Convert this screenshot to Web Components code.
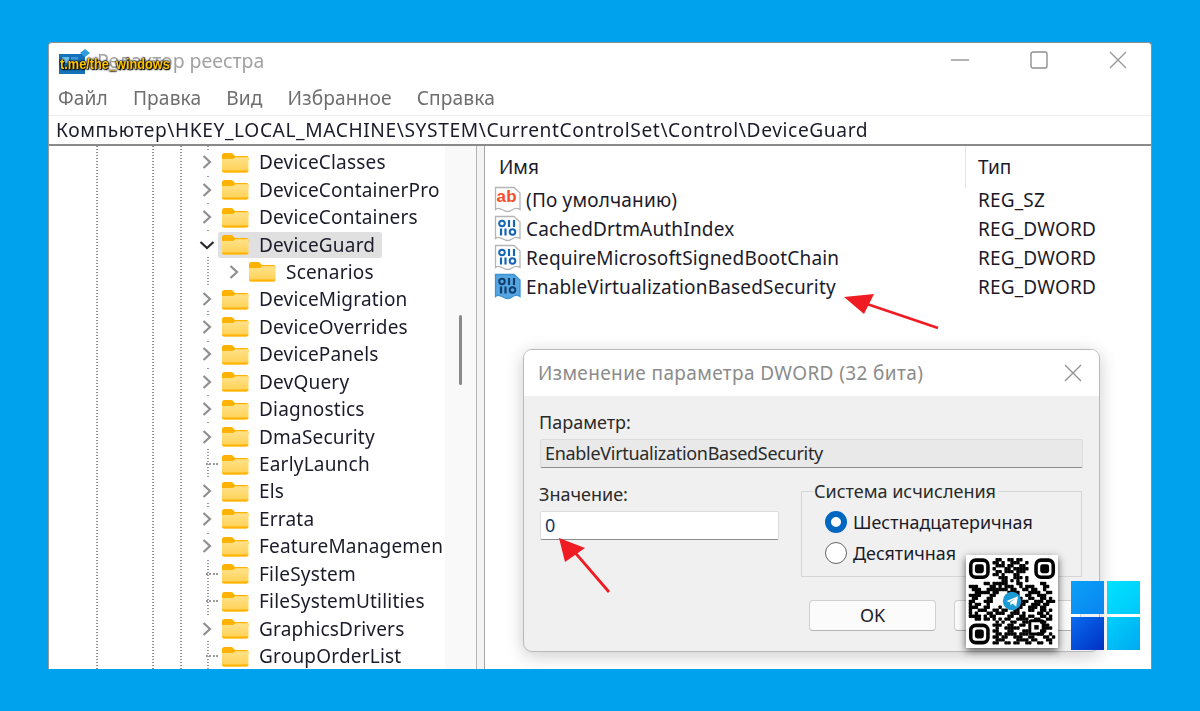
<!DOCTYPE html>
<html lang="ru">
<head>
<meta charset="utf-8">
<title>Редактор реестра</title>
<style>
  html, body { margin: 0; height: 100%; }
  body { background: #00a2ed; overflow: hidden; font-family: "Noto Sans", "Open Sans", sans-serif; }
</style>
</head>
<body>
<reg-window>
  <reg-tree slot="tree"></reg-tree>
  <reg-list slot="list"></reg-list>
  <dword-dialog slot="over"></dword-dialog>
  <red-arrows slot="over"></red-arrows>
</reg-window>
<qr-badge></qr-badge>
<win-logo></win-logo>

<script>
const folderIcon = `
  <svg width="28" height="21" viewBox="0 0 28 21">
    <defs><linearGradient id="f" x1="0" y1="0" x2="0" y2="1"><stop offset="0" stop-color="#ffe28a"/><stop offset="1" stop-color="#ffd052"/></linearGradient></defs>
    <path d="M1 3.500Q1 1 3.500 1H11l3 3h11.500Q27.500 4 27.500 6V8H1Z" fill="#ffb200"/>
    <path d="M1 7H12l2.500-1.800H27.500V18.500Q27.500 20.500 25.500 20.500H3Q1 20.500 1 18.500Z" fill="url(#f)"/>
    <path d="M1 18.500H27.500Q27.500 20.500 25.500 20.500H3Q1 20.500 1 18.500Z" fill="#ffb200"/>
  </svg>`;

class TreeRow extends HTMLElement {
  connectedCallback() {
    const name = this.getAttribute('name');
    const exp = this.getAttribute('exp') || 'closed';
    const sub = this.hasAttribute('sub');
    const sel = this.hasAttribute('selected');
    let mark = '<span class="stub"></span>';
    if (exp === 'closed') mark = '<svg class="chev" width="14" height="24" viewBox="0 0 14 24"><path d="M3.500 6 10 12 3.500 18" fill="none" stroke="#8f8f8f" stroke-width="2.200"/></svg>';
    if (exp === 'open') mark = '<svg class="chev" width="16" height="24" viewBox="0 0 16 24"><path d="M1.500 9 8 15 14.500 9" fill="none" stroke="#2a2a2a" stroke-width="2.200"/></svg>';
    this.attachShadow({mode:'open'}).innerHTML = `
      <style>
        :host { display: flex; align-items: center; height: 27.44px; padding-left: ${sub ? 174 : 147}px; white-space: nowrap; color: #1b1b2a; }
        .exp { width: 22px; display: flex; justify-content: center; align-items: center; flex: none; height: 100%; }
        .chev { background: #fff; }
        .stub { width: 13px; margin-left: 10px; border-top: 2px dotted #9a9a9a; }
        .item { display: flex; align-items: center; gap: 10px; height: 26px; padding: 0 7px 0 3px; border-radius: 2px; background: ${sel ? '#e0e0e0' : 'transparent'}; flex: none; }
        svg { display: block; flex: none; }
        span.t { font-size: 19px; line-height: 26px; letter-spacing: .2px; }
      </style>
      <span class="exp">${mark}</span>
      <span class="item">${folderIcon}<span class="t">${name}</span></span>`;
  }
}
customElements.define('tree-row', TreeRow);

class RegTree extends HTMLElement {
  connectedCallback() {
    const rows = [
      ['DeviceClasses'], ['DeviceContainerPro'], ['DeviceContainers'],
      ['DeviceGuard', 'open', 'sel'], ['Scenarios', 'closed', 'sub'],
      ['DeviceMigration'], ['DeviceOverrides'], ['DevicePanels'], ['DevQuery'],
      ['Diagnostics'], ['DmaSecurity'], ['EarlyLaunch', 'none'], ['Els'], ['Errata'],
      ['FeatureManagemen'], ['FileSystem', 'none'], ['FileSystemUtilities', 'none'],
      ['GraphicsDrivers'], ['GroupOrderList', 'none']
    ];
    this.attachShadow({mode:'open'}).innerHTML = `
      <style>
        :host { display: flex; height: 100%; overflow: hidden; background: #fff; }
        .rows {
          width: 396px; flex: none; overflow: hidden; padding-top: 3px;
          background:
            linear-gradient(#8f8f8f 50%, transparent 50%) 47px 0 / 2px 3px repeat-y,
            linear-gradient(#8f8f8f 50%, transparent 50%) 103px 0 / 2px 3px repeat-y,
            linear-gradient(#8f8f8f 50%, transparent 50%) 131px 0 / 2px 3px repeat-y,
            linear-gradient(#9a9a9a 50%, transparent 50%) 158px 0 / 2px 3px repeat-y;
        }
        .track { width: 31px; flex: none; background: #f9f9f9; display: flex; justify-content: center; padding-top: 169px; box-sizing: border-box; }
        .thumb { width: 3px; height: 70px; background: #8a8a8a; border-radius: 2px; }
      </style>
      <div class="rows">${rows.map(r => `<tree-row name="${r[0]}" exp="${r[1] || 'closed'}" ${r[2] === 'sel' ? 'selected' : ''} ${r[2] === 'sub' ? 'sub' : ''}></tree-row>`).join('')}</div>
      <div class="track"><div class="thumb"></div></div>`;
  }
}
customElements.define('reg-tree', RegTree);

// little page icon of the value list: "ab" text or the binary pattern
function valueIcon(kind) {
  const sel = kind === 'sel';
  const page = `<path d="M1.500 1.500H20L26 7V23.500Q22 21 18 24T9 24 1.500 23.500Z" fill="${sel ? '#55a6e2' : '#fff'}" stroke="${sel ? '#3f93d2' : '#b5b5b5'}" stroke-width="1.300"/>`;
  if (kind === 'ab') {
    return `<svg width="29" height="27" viewBox="0 0 29 27">${page}
      <text x="2.500" y="15.500" font-family="Liberation Sans" font-weight="700" font-size="17" fill="#f4502a">ab</text></svg>`;
  }
  const c = sel ? '#12406e' : '#1565b5';
  const ring = (x, y) => `<ellipse cx="${x}" cy="${y}" rx="2.800" ry="2.700" fill="none" stroke="${c}" stroke-width="2"/>`;
  const bar = (x, y) => `<rect x="${x - 1.100}" y="${y - 3.500}" width="2.200" height="7" fill="${c}"/>`;
  return `<svg width="29" height="27" viewBox="0 0 29 27">${page}
    ${ring(8, 8.500)}${bar(15, 8.500)}${bar(20, 8.500)}
    ${bar(7, 17)}${bar(11.500, 17)}${ring(18.500, 17)}</svg>`;
}

class ValueRow extends HTMLElement {
  connectedCallback() {
    this.attachShadow({mode:'open'}).innerHTML = `
      <style>
        :host { display: grid; grid-template-columns: 480px 1fr; align-items: center; height: 29px; color: #1b1b2a; font-size: 19px; letter-spacing: .18px; white-space: nowrap; }
        .n { display: flex; align-items: center; gap: 3px; padding-left: 9px; }
        .ty { padding-left: 13px; }
        svg { display: block; flex: none; }
      </style>
      <div class="n">${valueIcon(this.getAttribute('icon'))}<span>${this.getAttribute('name')}</span></div>
      <div class="ty">${this.getAttribute('type')}</div>`;
  }
}
customElements.define('value-row', ValueRow);

class RegList extends HTMLElement {
  connectedCallback() {
    this.attachShadow({mode:'open'}).innerHTML = `
      <style>
        :host { display: block; height: 100%; background: #fff; }
        .head { display: grid; grid-template-columns: 480px 1fr; height: 39.500px; font-size: 19px; color: #1b1b2a; line-height: 42px; }
        .head div:first-child { padding-left: 14px; }
        .head div:last-child { padding-left: 12px; border-left: 1px solid #e4e4e4; }
      </style>
      <div class="head"><div>Имя</div><div>Тип</div></div>
      <div class="rows">
        <value-row icon="ab" name="(По умолчанию)" type="REG_SZ"></value-row>
        <value-row icon="bin" name="CachedDrtmAuthIndex" type="REG_DWORD"></value-row>
        <value-row icon="bin" name="RequireMicrosoftSignedBootChain" type="REG_DWORD"></value-row>
        <value-row icon="sel" name="EnableVirtualizationBasedSecurity" type="REG_DWORD"></value-row>
      </div>`;
  }
}
customElements.define('reg-list', RegList);

class RadioOpt extends HTMLElement {
  connectedCallback() {
    const on = this.hasAttribute('checked');
    this.attachShadow({mode:'open'}).innerHTML = `
      <style>
        :host { display: flex; align-items: center; gap: 6px; height: 31px; font-size: 17.900px; color: #1b1b2a; white-space: nowrap; }
        i { width: 22px; height: 22px; box-sizing: border-box; border-radius: 50%; flex: none; background: #fff; border: ${on ? '6.500px solid #0067c0' : '1.700px solid #666'}; }
      </style>
      <i></i><span><slot></slot></span>`;
  }
}
customElements.define('radio-opt', RadioOpt);

class DwordDialog extends HTMLElement {
  constructor() {
    super();
    this.attachShadow({mode:'open'}).innerHTML = `
      <style>
        :host { position: absolute; left: 474px; top: 306px; width: 577px; height: 303px; box-sizing: border-box; display: flex; flex-direction: column; background: #f0f0f0; border: 1px solid #b9b9b9; border-radius: 9px; overflow: hidden; box-shadow: 0 4px 18px rgba(0,0,0,.2); color: #2a2a2a; font-size: 18px; }
        .title { height: 46px; flex: none; background: #fff; display: flex; align-items: center; justify-content: space-between; padding: 0 17px 0 14px; color: #8b8b8b; font-size: 19px; letter-spacing: .38px; white-space: nowrap; }
        .title svg { display: block; }
        .body { padding: 15px 16px 0 15px; display: flex; flex-direction: column; }
        label { line-height: 22px; height: 22px; display: block; }
        .field { height: 29px; box-sizing: border-box; margin-top: 6px; border: 1px solid #dcdcdc; border-bottom: 1.500px solid #8c8c8c; padding-left: 4px; line-height: 27px; border-radius: 2px; }
        .ro { background: #e9e9e9; letter-spacing: -.3px; margin-left: 1px; }
        .low { display: grid; grid-template-columns: 240px 281px; column-gap: 22px; margin-top: 15px; }
        .inp { background: #fff; color: #123a66; margin-left: 1px; }
        fieldset { margin: -2px 0 0; padding: 5px 0 0 23px; height: 96px; box-sizing: border-box; border: 1px solid #d6d6d6; min-width: 0; }
        legend { padding: 0 2px 0 1px; margin-left: -12px; font-size: 18px; line-height: 20px; white-space: nowrap; color: #2a2a2a; }
        .btns { display: flex; gap: 18px; margin-top: 23px; padding-left: 270px; }
        .btn { width: 127px; height: 31px; box-sizing: border-box; border: 1px solid #d0d0d0; border-bottom: 1.500px solid #b4b4b4; border-radius: 4px; background: #fbfbfb; text-align: center; line-height: 29px; font-size: 18px; color: #1b1b2a; }
      </style>
      <div class="title"><span>Изменение параметра DWORD (32 бита)</span>
        <svg width="18" height="18" viewBox="0 0 18 18"><path d="M1 1 17 17M17 1 1 17" stroke="#8f8f8f" stroke-width="1.300"/></svg></div>
      <div class="body">
        <label>Параметр:</label>
        <div class="field ro">EnableVirtualizationBasedSecurity</div>
        <div class="low">
          <div><label>Значение:</label><div class="field inp">0</div></div>
          <fieldset><legend>Система исчисления</legend>
            <radio-opt checked>Шестнадцатеричная</radio-opt>
            <radio-opt>Десятичная</radio-opt>
          </fieldset>
        </div>
        <div class="btns"><div class="btn">OK</div><div class="btn">Отмена</div></div>
      </div>`;
  }
}
customElements.define('dword-dialog', DwordDialog);

class RedArrows extends HTMLElement {
  constructor() {
    super();
    this.attachShadow({mode:'open'}).innerHTML = `
      <style>:host { position: absolute; left: 0; top: 0; width: 100%; height: 100%; pointer-events: none; } svg { display: block; }</style>
      <svg width="1104" height="627" viewBox="48 42 1104 627">
        <path d="M937 327 866 303" stroke="#f01c24" stroke-width="2.800" fill="none"/>
        <path d="M843 296 873 293 863 313Z" fill="#f01c24"/>
        <path d="M608 591 571 548" stroke="#f01c24" stroke-width="2.800" fill="none"/>
        <path d="M558 537 584 547 564 561Z" fill="#f01c24"/>
      </svg>`;
  }
}
customElements.define('red-arrows', RedArrows);

class RegWindow extends HTMLElement {
  constructor() {
    super();
    this.attachShadow({mode:'open'}).innerHTML = `
      <style>
        :host { position: absolute; left: 48px; top: 42px; width: 1104px; height: 627px; box-sizing: border-box; display: flex; flex-direction: column; background: #fff; border-top: 1.500px solid #8f8f8f; border-left: 1px solid #9a9a9a; border-right: 1px solid #8f8f8f; border-radius: 4px 4px 0 0; overflow: hidden; filter: blur(.35px); }
        .title { height: 37px; box-sizing: border-box; padding-bottom: 3px; flex: none; position: relative; display: flex; align-items: center; justify-content: space-between; padding-left: 10px; color: #a2a2a2; font-size: 19.500px; white-space: nowrap; }
        .title .txt { margin-left: 38px; }
        .ctl { display: flex; align-items: center; gap: 61px; padding-right: 24px; }
        .ctl svg { display: block; }
        .logo { position: absolute; left: 9px; top: 6px; }
        .tag { position: absolute; left: 11px; top: 12.500px; font: 700 14.500px/16px "Liberation Sans", sans-serif; color: #ffc400; white-space: nowrap; transform: scaleX(.88); transform-origin: 0 50%; text-shadow: 0 0 2px #000, 0 0 2px #000, 1px 1px 1px #000, 0 0 3px #000; }
        .menu { height: 35px; flex: none; display: flex; align-items: center; padding-left: 9px; font-size: 19.200px; letter-spacing: .1px; color: #6e6e6e; white-space: nowrap; }
        .menu span { margin-right: 25px; }
        .addr { height: 27.500px; flex: none; display: flex; align-items: center; padding-left: 7px; border-top: 1px solid #ededed; border-bottom: 2px solid #8a8a8a; font-size: 19.200px; letter-spacing: .59px; color: #1b1b2a; white-space: nowrap; }
        .panes { flex: 1; display: grid; grid-template-columns: 427px 1fr; min-height: 0; }
        .split { display: grid; grid-template-columns: 9px 1fr; height: 100%; }
        .split i { background: #f4f4f4; border-left: 1px solid #b5b5b5; border-right: 1px solid #a5a5a5; }
      </style>
      <div class="title">
        <svg class="logo" width="36" height="26" viewBox="0 0 36 26"><rect x="1" y="5" width="26" height="20" fill="#1472b8"/><rect x="4" y="8" width="7" height="6" fill="#6fc0ee"/><rect x="13" y="8" width="7" height="6" fill="#3c96d8"/><path d="M22 4 27 0 32 4 27 8Z" fill="#2f9ddd"/></svg>
        <span class="txt">Редактор реестра</span>
        <span class="tag">t.me/the_windows</span>
        <span class="ctl">
          <svg width="18" height="18" viewBox="0 0 18 18"><path d="M0 9H18" stroke="#9a9a9a" stroke-width="1.400"/></svg>
          <svg width="18" height="18" viewBox="0 0 18 18"><rect x="1" y="1" width="16" height="16" rx="2" fill="none" stroke="#8f8f8f" stroke-width="1.400"/></svg>
          <svg width="18" height="18" viewBox="0 0 18 18"><path d="M1 1 17 17M17 1 1 17" stroke="#9a9a9a" stroke-width="1.400"/></svg>
        </span>
      </div>
      <div class="menu"><span>Файл</span><span>Правка</span><span>Вид</span><span>Избранное</span><span>Справка</span></div>
      <div class="addr">Компьютер\\HKEY_LOCAL_MACHINE\\SYSTEM\\CurrentControlSet\\Control\\DeviceGuard</div>
      <div class="panes">
        <div><slot name="tree"></slot></div>
        <div class="split"><i></i><div><slot name="list"></slot></div></div>
      </div>
      <slot name="over"></slot>`;
  }
}
customElements.define('reg-window', RegWindow);

class QrBadge extends HTMLElement {
  connectedCallback() {
    const m = [
      '........0110011011000........',
      '........1101001110010........',
      '........0111011001100........',
      '........1000110111110........',
      '........0110111011100........',
      '........1101000110000........',
      '........0011100111010........',
      '........0001101010010........',
      '00000110111110001100000011000',
      '11100001101011100101110001100',
      '01110011111110110011011001000',
      '00111110110001111000111100110',
      '11110001100000001001100111000',
      '01100011000000001100110011010',
      '11000111000000000111001110111',
      '10110010000000000110011101100',
      '11100110001000011100111011000',
      '10011100110110011000110011010',
      '10100011011100111010000110100',
      '11110101100001100110110011010',
      '00110110101011001111001100110',
      '........010100110011....11000',
      '........111001100110....01100',
      '........010011111000....01110',
      '........110001100011....11000',
      '........011011110111000110010',
      '........110110011100110001101',
      '........011100001111011000110',
      '........110011011001100110010'
    ];
    let cells = '';
    m.forEach((row, y) => [...row].forEach((c, x) => {
      if (c === '1') cells += `<rect x="${x - .07}" y="${y - .07}" width="1.140" height="1.140" rx=".25"/>`;
    }));
    const finder = (x, y) => `<rect x="${x + .6}" y="${y + .6}" width="5.800" height="5.800" rx="1.700" fill="none" stroke="#000" stroke-width="1.200"/><rect x="${x + 2}" y="${y + 2}" width="3" height="3" rx=".8"/>`;
    this.attachShadow({mode:'open'}).innerHTML = `
      <style>
        :host { position: absolute; left: 966px; top: 555px; width: 92px; height: 93px; background: #fff; box-shadow: 0 3px 8px rgba(0,0,0,.65); filter: blur(.3px); }
        svg { display: block; }
      </style>
      <svg width="92" height="93" viewBox="-1 -1.100 31 31.300">
        ${cells}${finder(0, 0)}${finder(22, 0)}${finder(0, 22)}
        <rect x="20.500" y="21" width="4.500" height="4.500" rx=".6" fill="none" stroke="#000"/><rect x="22" y="22.500" width="1.500" height="1.500"/>
        <circle cx="14.500" cy="14.400" r="3.100" fill="#1c9ad6"/>
        <path d="M12.700 14.400 16.500 12.800 15.900 16.200 14.600 15.200 14 15.900 13.900 14.900 15.500 13.500 13.500 14.800Z" fill="#fff"/>
      </svg>`;
  }
}
customElements.define('qr-badge', QrBadge);

class WinLogo extends HTMLElement {
  constructor() {
    super();
    this.attachShadow({mode:'open'}).innerHTML = `
      <style>
        :host { position: absolute; left: 1071px; top: 581px; display: grid; grid-template-columns: 33px 33px; grid-template-rows: 33px 33px; gap: 3px; }
        i:nth-of-type(1) { background: linear-gradient(135deg, #0aa0f8, #0a84ee); }
        i:nth-of-type(2) { background: linear-gradient(135deg, #00e2ff, #00c8fa); }
        i:nth-of-type(3) { background: linear-gradient(135deg, #0a6cee, #0030c4); }
        i:nth-of-type(4) { background: linear-gradient(135deg, #00d0fc, #00aaf0); }
      </style>
      <i></i><i></i><i></i><i></i>`;
  }
}
customElements.define('win-logo', WinLogo);
</script>
</body>
</html>
